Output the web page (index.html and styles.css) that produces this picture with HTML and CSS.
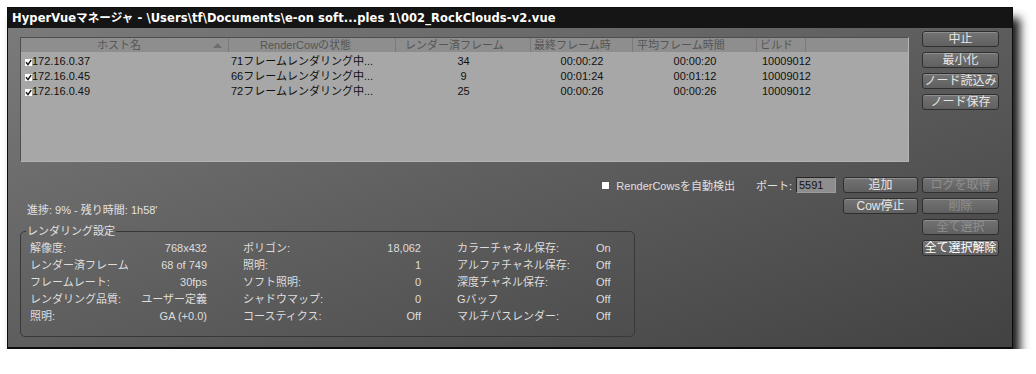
FILE: index.html
```html
<!DOCTYPE html>
<html lang="ja">

<head>
  <meta charset="UTF-8">
  <title>HyperVueマネージャ</title>
  <link rel="stylesheet" href="styles.css">
</head>

<body>
  <div class="window">
    <div class="titlebar">HyperVueマネージャ - \Users\tf\Documents\e-on soft...ples 1\002_RockClouds-v2.vue</div>

    <div class="content">
      <div class="top">
        <div class="list">
          <div class="list-head">
            <div class="hcell h1">ホスト名
              <svg class="sort" width="9" height="5" viewBox="0 0 9 5"><polygon points="0,5 4.5,0 9,5" fill="#6e6e6e"/></svg>
            </div>
            <div class="hcell h2">RenderCowの状態</div>
            <div class="hcell h3">レンダー済フレーム</div>
            <div class="hcell h4">最終フレーム時</div>
            <div class="hcell h5">平均フレーム時間</div>
            <div class="hcell h6">ビルド</div>
            <div class="hcell h7"></div>
          </div>
          <div class="list-body">
            <div class="row">
              <div class="cell host"><svg class="check" width="7" height="7" viewBox="0 0 7 7"><rect width="7" height="7" fill="#fff"/><path d="M1 3.2 L3 5.6 L6.2 1" stroke="#111" stroke-width="1.4" fill="none"/></svg>172.16.0.37</div>
              <div class="cell status">71フレームレンダリング中...</div>
              <div class="cell num">34</div>
              <div class="cell num">00:00:22</div>
              <div class="cell num">00:00:20</div>
              <div class="cell build">10009012</div>
            </div>
            <div class="row">
              <div class="cell host"><svg class="check" width="7" height="7" viewBox="0 0 7 7"><rect width="7" height="7" fill="#fff"/><path d="M1 3.2 L3 5.6 L6.2 1" stroke="#111" stroke-width="1.4" fill="none"/></svg>172.16.0.45</div>
              <div class="cell status">66フレームレンダリング中...</div>
              <div class="cell num">9</div>
              <div class="cell num">00:01:24</div>
              <div class="cell num">00:01:12</div>
              <div class="cell build">10009012</div>
            </div>
            <div class="row">
              <div class="cell host"><svg class="check" width="7" height="7" viewBox="0 0 7 7"><rect width="7" height="7" fill="#fff"/><path d="M1 3.2 L3 5.6 L6.2 1" stroke="#111" stroke-width="1.4" fill="none"/></svg>172.16.0.49</div>
              <div class="cell status">72フレームレンダリング中...</div>
              <div class="cell num">25</div>
              <div class="cell num">00:00:26</div>
              <div class="cell num">00:00:26</div>
              <div class="cell build">10009012</div>
            </div>
          </div>
        </div>

        <div class="side">
          <div class="btn">中止</div>
          <div class="btn">最小化</div>
          <div class="btn">ノード読込み</div>
          <div class="btn">ノード保存</div>
        </div>
      </div>

      <div class="lower">
        <div class="lower-main">
          <div class="controls">
            <span class="auto-detect"><span class="box"></span>RenderCowsを自動検出</span>
            <span class="port-label">ポート:</span>
            <span class="port">5591</span>
          </div>
          <div class="progress">進捗: 9% - 残り時間: 1h58'</div>
          <fieldset class="settings">
            <legend>レンダリング設定</legend>
            <div class="groups">
              <div class="group">
                <span>解像度:</span><span class="v">768x432</span>
                <span>レンダー済フレーム</span><span class="v">68 of 749</span>
                <span>フレームレート:</span><span class="v">30fps</span>
                <span>レンダリング品質:</span><span class="v">ユーザー定義</span>
                <span>照明:</span><span class="v">GA (+0.0)</span>
              </div>
              <div class="group g2">
                <span>ポリゴン:</span><span class="v">18,062</span>
                <span>照明:</span><span class="v">1</span>
                <span>ソフト照明:</span><span class="v">0</span>
                <span>シャドウマップ:</span><span class="v">0</span>
                <span>コースティクス:</span><span class="v">Off</span>
              </div>
              <div class="group g3">
                <span>カラーチャネル保存:</span><span>On</span>
                <span>アルファチャネル保存:</span><span>Off</span>
                <span>深度チャネル保存:</span><span>Off</span>
                <span>Gバッフ</span><span>Off</span>
                <span>マルチパスレンダー:</span><span>Off</span>
              </div>
            </div>
          </fieldset>
        </div>

        <div class="btn-col">
          <div class="btn">追加</div>
          <div class="btn">Cow停止</div>
        </div>
        <div class="btn-col wide">
          <div class="btn disabled">ログを取得</div>
          <div class="btn disabled">削除</div>
          <div class="btn disabled">全て選択</div>
          <div class="btn bright">全て選択解除</div>
        </div>
      </div>
    </div>
  </div>
</body>

</html>
```

FILE: styles.css
```css
body {
  margin: 0;
  background-color: white;
  font-family: 'Liberation Sans', 'Noto Sans CJK JP', sans-serif;
  font-size: 11px;
}

.window {
  margin: 7px 0 0 7px;
  width: 1006px;
  height: 342px;
  box-sizing: border-box;
  border: 1px solid #0d0d0d;
  border-bottom-width: 2px;
  background: linear-gradient(to bottom right, #7c7c7c, #5e5e5e 50%, #424242);
  box-shadow: 7px 11px 9px rgba(0, 0, 0, 0.9);
  display: flex;
  flex-direction: column;
}

.titlebar {
  height: 20px;
  line-height: 21px;
  padding-left: 4px;
  background-color: #151515;
  color: white;
  font-family: 'DejaVu Sans', 'Noto Sans CJK JP', sans-serif;
  font-weight: bold;
  font-size: 11.5px;
  letter-spacing: 0.1px;
  white-space: nowrap;
}

.content {
  padding: 3px 13px 0 12px;
}

.top {
  display: flex;
  gap: 13px;
}

/* host list */
.list {
  width: 889px;
  height: 125px;
  margin-top: 6px;
  box-sizing: border-box;
  background-color: #a7a7a7;
  border-top: 1px solid #4e4e4e;
  border-left: 1px solid #4e4e4e;
  border-right: 1px solid #b4b4b4;
  border-bottom: 1px solid #b4b4b4;
}

.list-head,
.row {
  display: grid;
  grid-template-columns: 208px 167px 135px 102px 124px 49px 1fr;
}

.list-head {
  height: 14px;
  line-height: 14px;
  background-color: #8e8e8e;
  color: #555;
}

.hcell {
  box-sizing: border-box;
  border-right: 1px solid #7a7a7a;
  white-space: nowrap;
  overflow: hidden;
}

.h1 {
  display: flex;
  align-items: center;
  padding: 0 6px 0 76px;
}

.sort {
  margin-left: auto;
}

.h2 { padding-left: 31px; }
.h3 { padding-left: 9px; }
.h4 { padding-left: 3px; }
.h5 { padding-left: 4px; }
.h6 { padding-left: 3px; }
.h7 { border-right: none; }

.list-body {
  padding-top: 2px;
}

.row {
  height: 15px;
  line-height: 15px;
  color: #111;
}

.cell {
  white-space: nowrap;
}

.host {
  padding-left: 4px;
}

.check {
  vertical-align: -1px;
}

.status {
  padding-left: 2px;
}

.num {
  text-align: center;
}

.build {
  padding-left: 5px;
}

/* buttons */
.side {
  width: 77px;
  display: flex;
  flex-direction: column;
  gap: 5px;
}

.btn {
  height: 16px;
  box-sizing: border-box;
  border: 1px solid #2f2f2f;
  border-radius: 3px;
  background: linear-gradient(#737373, #606060);
  box-shadow: inset 0 1px 0 rgba(255, 255, 255, 0.2);
  color: #e6e6e6;
  font-size: 12px;
  line-height: 14px;
  text-align: center;
  white-space: nowrap;
}

.btn.disabled {
  color: #8e8e8e;
}

.btn.bright {
  color: white;
}

/* lower part */
.lower {
  display: flex;
  margin-top: 15px;
}

.lower-main {
  flex: 1;
}

.btn-col {
  width: 75px;
  margin-left: 5px;
  display: flex;
  flex-direction: column;
  gap: 5px;
}

.btn-col.wide {
  width: 77px;
  margin-left: 4px;
}

.controls {
  height: 16px;
  display: flex;
  justify-content: flex-end;
  align-items: center;
  color: #e0e0e0;
  padding-right: 2px;
}

.auto-detect {
  display: flex;
  align-items: center;
  gap: 6px;
  margin-right: 21px;
}

.box {
  width: 9px;
  height: 9px;
  box-sizing: border-box;
  background-color: white;
  border: 1px solid #555;
}

.port-label {
  margin-right: 4px;
}

.port {
  width: 40px;
  height: 16px;
  box-sizing: border-box;
  padding-left: 2px;
  line-height: 14px;
  background-color: #8e8e8e;
  color: #111;
  border: 1px solid;
  border-color: #262626 #9c9c9c #9c9c9c #262626;
}

.progress {
  margin-top: 10px;
  padding-left: 7px;
  line-height: 14px;
  color: #e2e2e2;
}

.settings {
  margin: 7px 0 0;
  width: 615px;
  box-sizing: border-box;
  padding: 2px 9px 11px;
  border: 1px solid #383838;
  border-radius: 5px;
  color: #dedede;
}

.settings legend {
  margin-left: -4px;
  padding: 0 1px;
  line-height: 14px;
  color: #e2e2e2;
}

.groups {
  display: flex;
  gap: 36px;
}

.group {
  width: 177px;
  display: grid;
  grid-template-columns: 1fr auto;
  line-height: 17px;
  white-space: nowrap;
}

.group .v {
  text-align: right;
}

.group.g2 {
  width: 178px;
}

.group.g3 {
  width: auto;
  grid-template-columns: 139px auto;
}
```
